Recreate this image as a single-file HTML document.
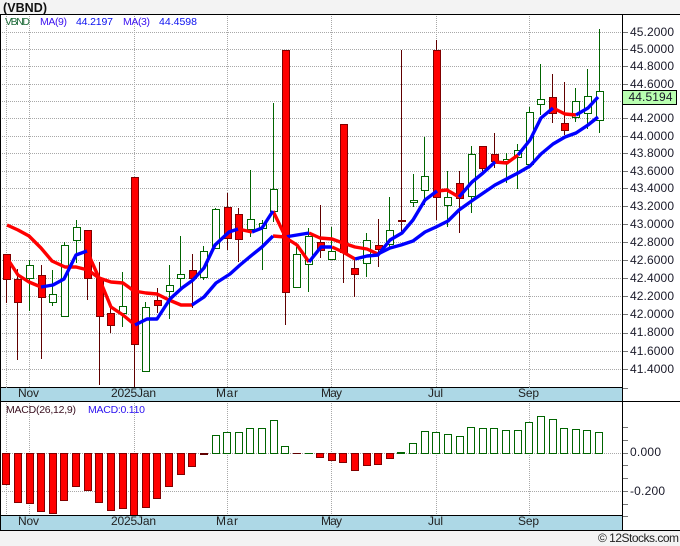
<!DOCTYPE html>
<html><head><meta charset="utf-8"><style>
html,body{margin:0;padding:0;background:#f3f3f3}
svg{display:block}
text{font-family:"Liberation Sans",sans-serif}
.a{font-size:12px;fill:#1a1a2a}
.b{font-size:12px;fill:#222}
</style></head><body>
<svg width="680" height="546" viewBox="0 0 680 546" xmlns="http://www.w3.org/2000/svg">
<rect width="680" height="546" fill="#f3f3f3"/>
<rect x="0" y="14" width="680" height="517" fill="#fff"/>
<g shape-rendering="crispEdges">
<path fill="none" stroke="#a8a8a8" stroke-dasharray="1 1" d="M0 32.5H622M0 49.5H622M0 66.5H622M0 84.5H622M0 101.5H622M0 118.5H622M0 136.5H622M0 153.5H622M0 171.5H622M0 188.5H622M0 206.5H622M0 224.5H622M0 242.5H622M0 260.5H622M0 278.5H622M0 296.5H622M0 314.5H622M0 333.5H622M0 351.5H622M0 369.5H622M0 453.5H622M0 491.5H622M6.5 14V387M29.5 14V387M134.5 14V387M227.5 14V387M331.5 14V387M436.5 14V387M529.5 14V387M6.5 401V515M29.5 401V515M134.5 401V515M227.5 401V515M331.5 401V515M436.5 401V515M529.5 401V515"/>
<path fill="none" stroke="#777" d="M623 32.5h5M623 49.5h5M623 66.5h5M623 84.5h5M623 118.5h5M623 136.5h5M623 153.5h5M623 171.5h5M623 188.5h5M623 206.5h5M623 224.5h5M623 242.5h5M623 260.5h5M623 278.5h5M623 296.5h5M623 314.5h5M623 333.5h5M623 351.5h5M623 369.5h5M623 388.5h5M623 427.5h5M623 440.5h5M623 453.5h5M623 465.5h5M623 478.5h5M623 491.5h5M623 504.5h5M623 516.5h5"/>
<!-- wicks -->
<path fill="none" stroke="#600000" d="M6.5 254V303M17.5 269V360M41.5 265V359M87.5 230V300M99.5 262V385M110.5 308V333M134.5 177V387M157.5 288V313M192.5 254V308M227.5 193V250M238.5 208V262M285.5 50V325M320.5 205V258M343.5 124V283M354.5 258V297M378.5 219V267M401.5 50V233M436.5 40V220M459.5 171V233M482.5 146V172M494.5 133V168M552.5 74V123M564.5 82V135"/>
<path fill="none" stroke="#006400" d="M29.5 260V311M52.5 270V306M64.5 242V316M76.5 220V263M122.5 272V327M145.5 302V371M169.5 265V319M180.5 236V290M203.5 246V280M215.5 208V248M250.5 170V237M262.5 220V270M273.5 103V222M296.5 247V287M308.5 228V292M331.5 227V259M366.5 233V277M389.5 197V250M413.5 174V207M424.5 137V205M447.5 171V227M471.5 146V213M506.5 153V183M517.5 144V189M529.5 107V164M540.5 64V115M575.5 88V122M587.5 69V129M599.5 29V133"/>
<!-- bodies -->
<path fill="#ff0000" stroke="#800000" d="M3.5 254.5h7v25h-7zM14.5 279.5h7v23h-7zM38.5 275.5h7v22h-7zM84.5 230.5h7v48h-7zM96.5 278.5h7v38h-7zM107.5 313.5h7v12h-7zM131.5 177.5h7v167h-7zM154.5 300.5h7v5h-7zM189.5 270.5h7v8h-7zM224.5 207.5h7v31h-7zM235.5 214.5h7v25h-7zM282.5 50.5h7v242h-7zM317.5 242.5h7v8h-7zM340.5 124.5h7v128h-7zM351.5 268.5h7v6h-7zM375.5 245.5h7v4h-7zM398.5 220.5h7v1h-7zM433.5 50.5h7v147h-7zM456.5 183.5h7v15h-7zM479.5 146.5h7v22h-7zM491.5 154.5h7v7h-7zM549.5 97.5h7v16h-7zM561.5 123.5h7v7h-7z"/>
<path fill="#fff" stroke="#006400" d="M26.5 265.5h7v13h-7zM49.5 294.5h7v8h-7zM61.5 245.5h7v71h-7zM73.5 227.5h7v13h-7zM119.5 306.5h7v7h-7zM142.5 307.5h7v64h-7zM166.5 285.5h7v6h-7zM177.5 274.5h7v4h-7zM200.5 251.5h7v26h-7zM212.5 209.5h7v39h-7zM247.5 219.5h7v10h-7zM259.5 223.5h7v5h-7zM270.5 189.5h7v22h-7zM293.5 254.5h7v33h-7zM305.5 236.5h7v28h-7zM328.5 251.5h7v8h-7zM363.5 240.5h7v23h-7zM386.5 230.5h7v14h-7zM410.5 200.5h7v2h-7zM421.5 176.5h7v14h-7zM444.5 197.5h7v8h-7zM468.5 154.5h7v42h-7zM503.5 159.5h7v2h-7zM514.5 150.5h7v7h-7zM526.5 112.5h7v52h-7zM537.5 99.5h7v5h-7zM572.5 101.5h7v16h-7zM584.5 96.5h7v17h-7zM596.5 91.5h7v29h-7z"/>
</g>
<!-- MA lines -->
<g fill="none" stroke-width="3.4" stroke-linejoin="round" stroke-linecap="butt">
<path stroke="#ff0000" d="M7 225L18 230L29 236L41 248L52 261L65 267L76 267L88 270L99 278L111 282L123 283L134 291L146 293L157 294L169 300L181 305L192 305M285 237L273 236M309 233L320 238L332 239L343 243L355 247L367 249L378 254"/>
<path stroke="#0000ff" d="M192 305L204 297L216 283L230 274L240 265L252 255L262 247L273 236M285 237L297 235L309 233M378 254L390 248L401 245L413 241L425 232L436 227L448 221L459 210L473 200L495 185L518 173L530 166L541 154L553 144L565 137L576 133L588 125L598 117"/>
<path stroke="#ff0000" d="M7 258L18 275L29 282L41 287M87 251L99 278L111 307L123 315L135 325M238 229L252 232M273 211L286 238L297 245L309 262M332 247L343 252L355 259M437 191L447 190L459 197M495 162L507 163L518 155M553 108L565 114L576 115"/>
<path stroke="#0000ff" d="M41 287L53 285L64 279L76 255L87 251M135 325L147 319L157 319L170 299L182 288L193 280L204 268L215 245L229 232L238 229M252 232L262 228L273 211M309 262L321 247L332 247M355 259L367 256L378 255L390 240L402 233L413 220L425 200L437 191M459 197L472 182L483 173L495 162M518 155L530 140L541 118L553 108M576 115L588 108L598 97"/>
</g>
<g shape-rendering="crispEdges">
<!-- MACD -->
<path fill="#ff0000" stroke="#800000" d="M2.5 453.5h7v31h-7zM14.5 453.5h7v49h-7zM26.5 453.5h7v50h-7zM37.5 453.5h7v58h-7zM49.5 453.5h7v60h-7zM60.5 453.5h7v47h-7zM72.5 453.5h7v33h-7zM84.5 453.5h7v37h-7zM95.5 453.5h7v49h-7zM107.5 453.5h7v57h-7zM119.5 453.5h7v55h-7zM130.5 453.5h7v62h-7zM142.5 453.5h7v54h-7zM153.5 453.5h7v45h-7zM165.5 453.5h7v33h-7zM177.5 453.5h7v21h-7zM188.5 453.5h7v13h-7zM316.5 453.5h7v4h-7zM328.5 453.5h7v7h-7zM339.5 453.5h7v9h-7zM351.5 453.5h7v17h-7zM363.5 453.5h7v12h-7zM374.5 453.5h7v11h-7zM386.5 453.5h7v5h-7z"/>
<path fill="#fff" stroke="#006400" d="M212.5 435.5h7v18h-7zM223.5 432.5h7v21h-7zM235.5 432.5h7v21h-7zM246.5 428.5h7v25h-7zM258.5 428.5h7v25h-7zM270.5 420.5h7v33h-7zM281.5 446.5h7v7h-7zM409.5 443.5h7v10h-7zM421.5 431.5h7v22h-7zM432.5 432.5h7v21h-7zM444.5 434.5h7v19h-7zM456.5 436.5h7v17h-7zM467.5 427.5h7v26h-7zM479.5 428.5h7v25h-7zM490.5 428.5h7v25h-7zM502.5 430.5h7v23h-7zM514.5 430.5h7v23h-7zM525.5 422.5h7v31h-7zM537.5 416.5h7v37h-7zM549.5 419.5h7v34h-7zM560.5 428.5h7v25h-7zM572.5 429.5h7v24h-7zM583.5 430.5h7v23h-7zM595.5 432.5h7v21h-7z"/>
<rect x="200" y="453" width="8" height="2" fill="#600000"/>
<rect x="293" y="453" width="8" height="1" fill="#600000"/>
<rect x="305" y="453" width="8" height="1" fill="#006400"/>
<rect x="397" y="452" width="8" height="2" fill="#006400"/>
<!-- bands -->
<rect x="0" y="387" width="622" height="14" fill="#add8e6"/>
<rect x="0" y="515" width="622" height="15" fill="#add8e6"/>
<path fill="none" stroke="#000" d="M0 14.5H680M0 387.5H622M0 401.5H680M0 515.5H622M0 530.5H680M622.5 14V531M.5 14V531"/>
<path fill="none" stroke="#999" stroke-dasharray="1 1" d="M6.5 387v1M529.5 387v1"/>
<rect x="622.5" y="90.5" width="54" height="14" fill="#b9ffb0" stroke="#000"/>
</g>
<!-- text -->
<text x="3" y="12" font-size="12.5" font-weight="bold" fill="#111" textLength="44" lengthAdjust="spacing">(VBND)</text>
<text x="5" y="25" font-size="10.5" fill="#1f6b3a" textLength="25">VBND</text>
<text x="40" y="25" font-size="10.5" fill="#3a10f0" textLength="27">MA(9)</text>
<text x="76" y="25" font-size="10.5" fill="#0a10f0" textLength="37">44.2197</text>
<text x="123" y="25" font-size="10.5" fill="#3a10f0" textLength="27">MA(3)</text>
<text x="159" y="25" font-size="10.5" fill="#0a10f0" textLength="38">44.4598</text>
<text x="6" y="413" font-size="10.5" fill="#3a1020" textLength="70">MACD(26,12,9)</text>
<text x="88" y="413" font-size="10.5" fill="#2a10f0" textLength="57">MACD:0.110</text>
<g class="a">
<text class="a" x="630" y="36" textLength="44">45.2000</text>
<text class="a" x="630" y="53" textLength="44">45.0000</text>
<text class="a" x="630" y="70" textLength="44">44.8000</text>
<text class="a" x="630" y="88" textLength="44">44.6000</text>
<text class="a" x="630" y="122" textLength="44">44.2000</text>
<text class="a" x="630" y="140" textLength="44">44.0000</text>
<text class="a" x="630" y="157" textLength="44">43.8000</text>
<text class="a" x="630" y="175" textLength="44">43.6000</text>
<text class="a" x="630" y="192" textLength="44">43.4000</text>
<text class="a" x="630" y="210" textLength="44">43.2000</text>
<text class="a" x="630" y="228" textLength="44">43.0000</text>
<text class="a" x="630" y="246" textLength="44">42.8000</text>
<text class="a" x="630" y="264" textLength="44">42.6000</text>
<text class="a" x="630" y="282" textLength="44">42.4000</text>
<text class="a" x="630" y="300" textLength="44">42.2000</text>
<text class="a" x="630" y="318" textLength="44">42.0000</text>
<text class="a" x="630" y="336" textLength="44">41.8000</text>
<text class="a" x="630" y="355" textLength="44">41.6000</text>
<text class="a" x="630" y="373" textLength="44">41.4000</text>
<text class="a" x="628.5" y="101" textLength="44">44.5194</text>
<text class="a" x="630" y="456" textLength="31">0.000</text>
<text class="a" x="630" y="495" textLength="35">-0.200</text>
</g>
<g>
<text class="b" x="18" y="397" textLength="21">Nov</text>
<text class="b" x="111" y="397" textLength="45">2025Jan</text>
<text class="b" x="216" y="397" textLength="22">Mar</text>
<text class="b" x="321" y="397" textLength="21">May</text>
<text class="b" x="428" y="397" textLength="15">Jul</text>
<text class="b" x="518" y="397" textLength="21">Sep</text>
<text class="b" x="18" y="525" textLength="21">Nov</text>
<text class="b" x="111" y="525" textLength="45">2025Jan</text>
<text class="b" x="216" y="525" textLength="22">Mar</text>
<text class="b" x="321" y="525" textLength="21">May</text>
<text class="b" x="428" y="525" textLength="15">Jul</text>
<text class="b" x="518" y="525" textLength="21">Sep</text>
</g>
<text x="598" y="542" font-size="12" fill="#222" textLength="81">© 12Stocks.com</text>
</svg>
</body></html>
